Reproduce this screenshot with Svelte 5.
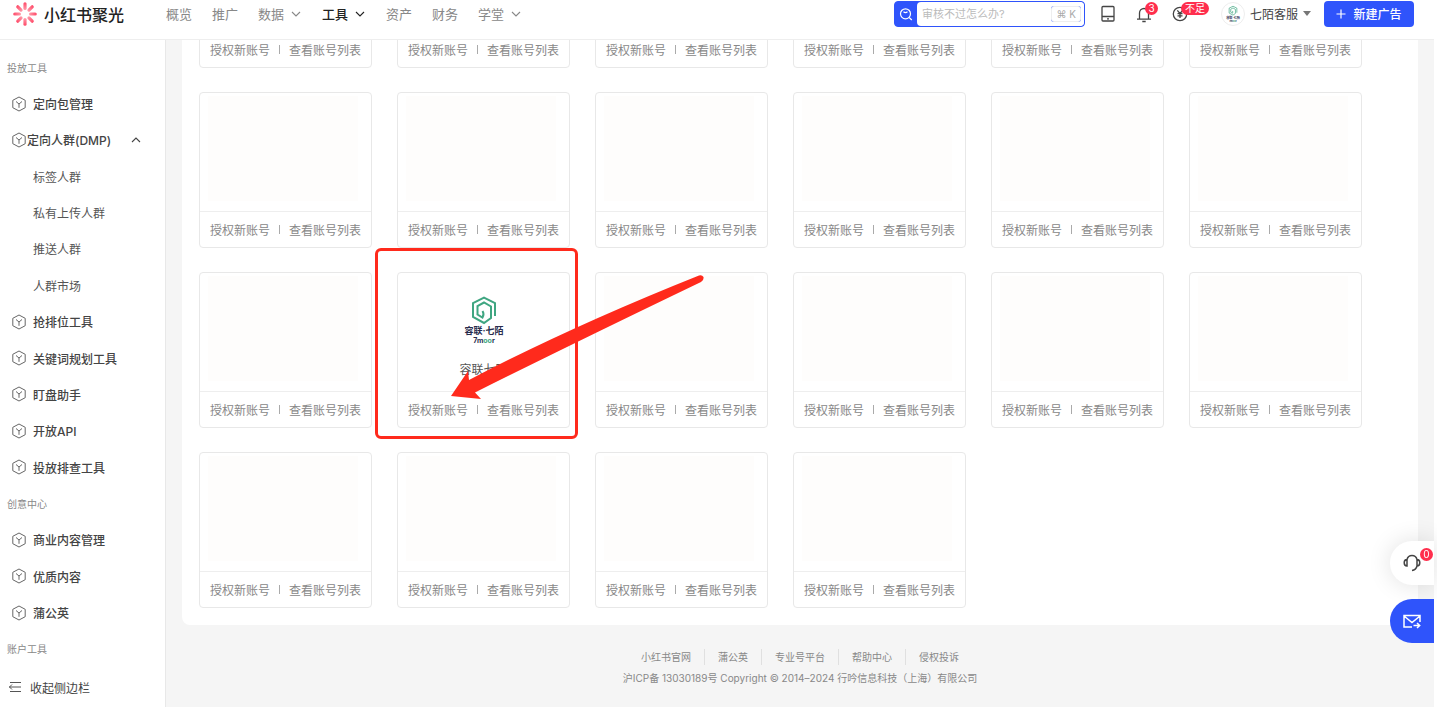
<script>
    const navItems = [
        { label: "概览" },
        { label: "推广" },
        { label: "数据", menu: true },
        { label: "工具", menu: true, active: true },
        { label: "资产" },
        { label: "财务" },
        { label: "学堂", menu: true },
    ];

    const sideItems = [
        { type: "group", label: "投放工具" },
        { type: "item", label: "定向包管理" },
        { type: "parent", label: "定向人群(DMP)" },
        { type: "child", label: "标签人群" },
        { type: "child", label: "私有上传人群" },
        { type: "child", label: "推送人群" },
        { type: "child", label: "人群市场" },
        { type: "item", label: "抢排位工具" },
        { type: "item", label: "关键词规划工具" },
        { type: "item", label: "盯盘助手" },
        { type: "item", label: "开放API" },
        { type: "item", label: "投放排查工具" },
        { type: "group", label: "创意中心" },
        { type: "item", label: "商业内容管理" },
        { type: "item", label: "优质内容" },
        { type: "item", label: "蒲公英" },
        { type: "group", label: "账户工具" },
    ];

    const footerLinks = ["小红书官网", "蒲公英", "专业号平台", "帮助中心", "侵权投诉"];

    // 22 providers, only one of them has public info
    const providers = Array.from({ length: 22 }, (_, i) =>
        i === 13 ? { name: "容联七陌" } : { name: "" },
    );

    const rays = [0, 45, 90, 135, 180, 225, 270, 315];
    let keyword = "";
</script>

{#snippet chevron()}
    <svg class="chevron" viewBox="0 0 12 12" width="12" height="12">
        <path d="M2 4 6 8 10 4" />
    </svg>
{/snippet}

{#snippet companyLogo(size)}
    <svg viewBox="0 0 40 50" width={size} height={size * 1.25} class="company">
        <path
            d="M31 22V9L20 3.500 9 9V23L20 29 27 24V12.500L20 8.500 13.500 12V20.500L18.500 23.500Q20.500 20 18.500 17"
        />
        <text class="cn" x="20" y="40" text-anchor="middle">容联·七陌</text>
        <text class="en" x="20" y="49" text-anchor="middle">7m<tspan>oo</tspan>r</text>
    </svg>
{/snippet}

<div class="page">
    <header>
        <a class="brand" href="#home">
            <svg viewBox="0 0 24 24" width="24" height="24">
                <defs>
                    <linearGradient id="ray" x1="0" y1="0" x2="0" y2="1">
                        <stop offset="0" stop-color="#ff4766" />
                        <stop offset="1" stop-color="#ff9cab" />
                    </linearGradient>
                </defs>
                {#each rays as angle}
                    <rect
                        x="10.400"
                        y="0.200"
                        width="3.200"
                        height="7.800"
                        rx="1.600"
                        fill="url(#ray)"
                        transform="rotate({angle} 12 12)"
                    />
                {/each}
            </svg>
            <span>小红书聚光</span>
        </a>

        <nav>
            {#each navItems as item}
                <a href="#nav" class:active={item.active}>
                    {item.label}
                    {#if item.menu}{@render chevron()}{/if}
                </a>
            {/each}
        </nav>

        <form class="search" on:submit|preventDefault>
            <button type="submit" aria-label="搜索">
                <svg viewBox="0 0 14 14" width="14" height="14">
                    <circle cx="6.500" cy="6.800" r="5" />
                    <path d="M10.200 10.500 12.800 13M4.500 4.800q2 1.500 4 0" />
                </svg>
            </button>
            <input type="text" aria-label="搜索" placeholder="审核不过怎么办?" bind:value={keyword} />
            <kbd>⌘ K</kbd>
        </form>

        <div class="tools">
            <button class="icon" aria-label="手机版">
                <svg viewBox="0 0 16 18" width="16" height="18">
                    <rect x="2" y="1.500" width="12" height="14.500" rx="1" />
                    <path d="M2 11.500h12M7 13.800h2" />
                </svg>
            </button>
            <button class="icon bell" aria-label="通知">
                <svg viewBox="0 0 16 18" width="16" height="18">
                    <path d="M3.500 14V8a4.500 4.500 0 0 1 9 0v6M1 14.200h14M6.300 16.500h3.400" />
                </svg>
                <span class="badge">3</span>
            </button>
            <button class="icon coin" aria-label="余额">
                <svg viewBox="0 0 16 18" width="16" height="18">
                    <circle cx="8" cy="9" r="6.700" />
                    <path d="M5.300 5.300 8 8.500 10.700 5.300M8 8.500V13M5.500 8.700h5M5.500 10.800h5" />
                </svg>
                <span class="badge">不足</span>
            </button>
        </div>

        <button class="account">
            <span class="avatar">{@render companyLogo(14)}</span>
            七陌客服
            <svg viewBox="0 0 8 5" width="8" height="5"><path d="M0 0h8L4 5z" fill="#777" /></svg>
        </button>

        <button class="create">
            <svg viewBox="0 0 10 10" width="10" height="10">
                <path d="M5 0.500v9M0.500 5h9" stroke="#fff" stroke-width="1.200" />
            </svg>
            新建广告
        </button>
    </header>

    <div class="body">
        <aside>
            <ul>
                {#each sideItems as item}
                    <li class={item.type}>
                        {#if item.type === "group"}
                            {item.label}
                        {:else}
                            <a href="#menu">
                                {#if item.type !== "child"}
                                    <svg viewBox="0 0 16 16" width="16" height="16">
                                        <path d="M8 1 14.200 4.300V11.700L8 15 1.800 11.700V4.300z" />
                                        <path d="M5 5.500 8 8 11 5.500M8 8v3.800" />
                                    </svg>
                                {/if}
                                <span>{item.label}</span>
                                {#if item.type === "parent"}{@render chevron()}{/if}
                            </a>
                        {/if}
                    </li>
                {/each}
            </ul>
            <button class="collapse">
                <svg viewBox="0 0 14 12" width="14" height="12">
                    <path d="M2 1.500h11M1 6h12M2 10.500h11M4 3.500 1.500 6 4 8.500" />
                </svg>
                收起侧边栏
            </button>
        </aside>

        <main>
            <section class="panel">
                {#each providers as provider}
                    <article class="card">
                        <div class="info">
                            {#if provider.name}
                                {@render companyLogo(40)}
                                <h3>{provider.name}</h3>
                            {:else}
                                <div class="blank"></div>
                            {/if}
                        </div>
                        <div class="actions">
                            <button>授权新账号</button>
                            <i></i>
                            <button>查看账号列表</button>
                        </div>
                        {#if provider.name}
                            <div class="highlight"></div>
                            <svg class="arrow" viewBox="0 0 260 132" width="260" height="132">
                                <path
                                    d="M1 123 18 98 19 107Q120 54 249 2.500 252 1.500 253.500 4 254 7.500 251 9Q120 72 25 119.500L31 126z"
                                />
                            </svg>
                        {/if}
                    </article>
                {/each}
            </section>

            <footer>
                <div class="links">
                    {#each footerLinks as link}
                        <a href="#footer">{link}</a>
                    {/each}
                </div>
                <p>沪ICP备 13030189号 Copyright © 2014–2024 行吟信息科技（上海）有限公司</p>
            </footer>
        </main>
    </div>

    <div class="float">
        <button class="service" aria-label="客服">
            <svg viewBox="0 0 18 18" width="18" height="18">
                <path
                    d="M4 5.500V12Q1.200 12 1.200 8.800T4 5.500Q5 1.500 9 1.500T14 5.500V12Q16.800 12 16.800 8.800T14 5.500M14 12Q13 16 9 16.500"
                />
            </svg>
            <span class="badge">0</span>
        </button>
        <button class="mail" aria-label="反馈">
            <svg viewBox="0 0 18 15" width="18" height="15">
                <path d="M9 13H1V1.500h16V8M1 2 9 8.500 17 2M10.500 11.500h6M14 9l2.700 2.500L14 14" />
            </svg>
        </button>
    </div>
</div>

<style>
    :global(body) {
        background: #fff;
        overflow: hidden;
    }
    .page {
        display: flex;
        flex-direction: column;
        height: 100vh;
        padding-right: 3px;
        box-sizing: border-box;
        font-family: Inter, "Noto Sans CJK SC", sans-serif;
        font-size: 12px;
        color: #444;
    }
    a {
        color: inherit;
        text-decoration: none;
    }
    button {
        padding: 0;
        border: none;
        background: none;
        font: inherit;
        color: inherit;
        white-space: nowrap;
        cursor: pointer;
    }
    svg {
        display: block;
        flex: none;
        fill: none;
    }

    header {
        display: flex;
        align-items: center;
        flex: none;
        height: 40px;
        padding: 0 20px 12px 13px;
        box-sizing: border-box;
        border-bottom: 1px solid #eee;
        background: #fff;
    }
    .brand {
        display: flex;
        align-items: center;
        gap: 7px;
        font-size: 16px;
        font-weight: 500;
        color: #222;
    }
    nav {
        display: flex;
        gap: 20px;
        margin-left: 42px;
        font-size: 13px;
        color: #888;
    }
    nav a {
        display: flex;
        align-items: center;
        gap: 6px;
    }
    nav .active {
        color: #222;
        font-weight: 500;
    }
    .chevron {
        stroke: currentColor;
        stroke-width: 1.1;
    }

    .search {
        display: flex;
        align-items: center;
        width: 191px;
        height: 26px;
        margin-left: auto;
        box-sizing: border-box;
        border: 1px solid #2f54fb;
        border-radius: 4px;
        background: #2f54fb;
        overflow: hidden;
    }
    .search button {
        display: flex;
        justify-content: center;
        width: 22px;
        flex: none;
    }
    .search svg {
        stroke: #fff;
        stroke-width: 1.2;
    }
    .search input {
        flex: 1;
        min-width: 0;
        height: 24px;
        padding: 0 5px;
        box-sizing: border-box;
        border: none;
        border-radius: 4px 0 0 4px;
        outline: none;
        font: inherit;
        font-size: 11px;
    }
    .search input::placeholder {
        color: #bbb;
    }
    kbd {
        display: flex;
        align-items: center;
        height: 14px;
        padding: 0 4px;
        border: 1px solid #eee;
        border-radius: 3px;
        background: #fff;
        outline: 5px solid #fff;
        margin-right: 3px;
        font: 10px Inter, "DejaVu Sans", sans-serif;
        color: #aaa;
    }

    .tools {
        display: flex;
        gap: 20px;
        margin-left: 15px;
    }
    .icon {
        position: relative;
    }
    .icon svg {
        stroke: #444;
        stroke-width: 1.3;
    }
    .badge {
        position: absolute;
        top: -3px;
        left: 9px;
        height: 13px;
        min-width: 13px;
        padding: 0 2px;
        box-sizing: border-box;
        border-radius: 7px;
        background: #ff2e4d;
        font-size: 10px;
        line-height: 13px;
        text-align: center;
        color: #fff;
    }
    .coin .badge {
        padding: 0 4px;
    }

    .account {
        display: flex;
        align-items: center;
        gap: 5px;
        margin-left: 33px;
    }
    .avatar {
        display: flex;
        align-items: center;
        justify-content: center;
        width: 22px;
        height: 22px;
        border: 1px solid #eee;
        border-radius: 50%;
    }
    .create {
        display: flex;
        align-items: center;
        justify-content: center;
        gap: 7px;
        width: 90px;
        height: 26px;
        margin-left: 13px;
        border-radius: 4px;
        background: #2f54fb;
        font-weight: 500;
        color: #fff;
    }

    .body {
        display: flex;
        flex: 1;
        min-height: 0;
    }
    aside {
        display: flex;
        flex-direction: column;
        flex: none;
        width: 166px;
        padding-top: 9px;
        box-sizing: border-box;
        border-right: 1px solid #e8e8e8;
    }
    ul {
        display: flex;
        flex-direction: column;
        flex: 1;
        margin: 0;
        padding: 0;
        list-style: none;
    }
    li {
        display: flex;
        align-items: center;
        flex: 1;
    }
    li a {
        display: flex;
        align-items: center;
        flex: 1;
        gap: 6px;
        padding-left: 11px;
    }
    li svg {
        stroke: #666;
    }
    .group {
        padding-left: 7px;
        font-size: 10px;
        color: #888;
    }
    .item,
    .parent {
        font-weight: 500;
    }
    .parent a {
        gap: 0;
        padding-right: 23px;
    }
    .parent .chevron {
        margin-left: auto;
        transform: rotate(180deg);
    }
    .child a {
        padding-left: 33px;
        color: #555;
    }
    .collapse {
        display: flex;
        align-items: center;
        gap: 8px;
        height: 40px;
        padding-left: 8px;
    }
    .collapse svg {
        stroke: #555;
    }

    /* list is scrolled to its end */
    main {
        display: flex;
        flex-direction: column;
        justify-content: flex-end;
        flex: 1;
        min-width: 0;
        padding: 0 16px;
        background: #f5f5f5;
        overflow: hidden;
    }
    .panel {
        display: grid;
        grid-template-columns: repeat(auto-fill, 173px);
        gap: 24px 25px;
        flex: none;
        padding: 17px;
        border-radius: 8px;
        background: #fff;
    }
    .card {
        position: relative;
        height: 156px;
        box-sizing: border-box;
        border: 1px solid #e8e8e8;
        border-radius: 4px;
    }
    .info {
        display: flex;
        flex-direction: column;
        align-items: center;
        height: 118px;
        border-bottom: 1px solid #eee;
    }
    .info .company {
        margin-top: 21px;
    }
    .blank {
        align-self: stretch;
        height: 105px;
        margin: 3px 13px 0 8px;
        background: #fefdfc;
    }
    h3 {
        margin: 17px 0 0;
        font-size: 12px;
        font-weight: 400;
        line-height: 18px;
        color: #555;
    }
    .company {
        overflow: visible;
    }
    .company path {
        stroke: #3fa681;
        stroke-width: 2;
    }
    .company text {
        font-family: Inter, "Noto Sans CJK SC", sans-serif;
        font-size: 9px;
        font-weight: 700;
        fill: #272b4d;
    }
    .company .en {
        font-size: 7px;
    }
    .company tspan {
        fill: #3fa681;
    }
    .actions {
        display: flex;
        align-items: center;
        justify-content: center;
        gap: 9px;
        height: 35px;
        color: #888;
    }
    .actions i {
        width: 1px;
        height: 9px;
        background: #aaa;
    }
    .highlight {
        position: absolute;
        inset: -25px -9px -12px -23px;
        border: 3px solid #ff2a1c;
        border-radius: 6px;
        pointer-events: none;
    }
    .arrow {
        position: absolute;
        left: 52px;
        top: 0;
        z-index: 1;
        pointer-events: none;
    }
    .arrow path {
        fill: #ff2a1c;
    }

    footer {
        flex: none;
        height: 82px;
        padding-top: 24px;
        box-sizing: border-box;
        font-size: 10px;
        line-height: 16px;
        text-align: center;
        color: #888;
    }
    .links {
        display: flex;
        justify-content: center;
    }
    .links a {
        padding: 0 13px;
    }
    .links a + a {
        border-left: 1px solid #e0e0e0;
    }
    footer p {
        margin: 5px 0 0;
    }

    .float {
        position: fixed;
        right: 3px;
        bottom: 64px;
        display: flex;
        flex-direction: column;
        gap: 14px;
    }
    .float button {
        position: relative;
        display: flex;
        align-items: center;
        width: 44px;
        height: 44px;
        padding-left: 13px;
        box-sizing: border-box;
        border-radius: 22px 0 0 22px;
    }
    .float svg {
        stroke-width: 1.5;
    }
    .service {
        background: #fff;
        box-shadow: 0 0 24px rgba(0, 0, 0, 0.12);
    }
    .service svg {
        stroke: #444;
    }
    .service .badge {
        top: 7px;
        left: 30px;
    }
    .mail {
        background: #2f54fb;
    }
    .mail svg {
        stroke: #fff;
    }
</style>
